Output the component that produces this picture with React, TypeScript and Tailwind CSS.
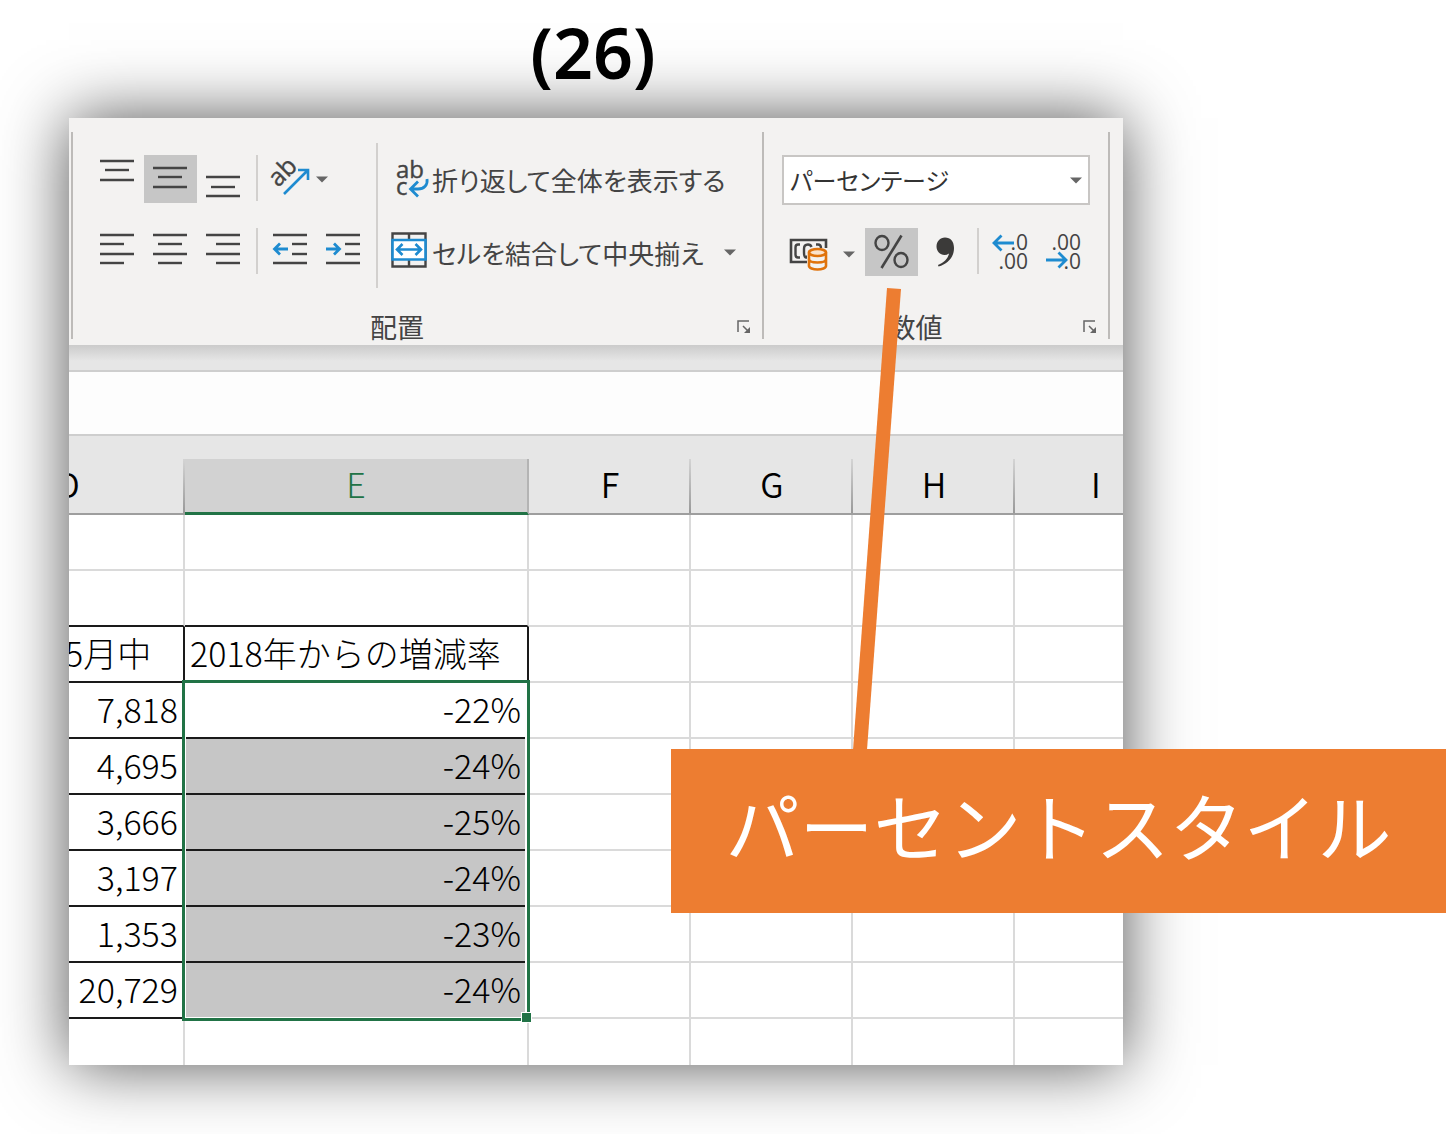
import type { ReactNode } from "react";

const INK = "#444444";
const BLUE = "#1e8bd0";

type Seg = [number, number, number];

/** Horizontal strokes: [x1, x2, y] */
function Lines({ segs, children }: { segs: Seg[]; children?: ReactNode }) {
  return (
    <svg width="53" height="48" viewBox="0 0 53 48" fill="none" aria-hidden="true">
      {segs.map(([a, b, y]) => (
        <path key={`${a}-${y}`} d={`M${a} ${y}H${b}`} stroke={INK} strokeWidth="2.4" />
      ))}
      {children}
    </svg>
  );
}

function IconButton({ label, pressed, children }: { label: string; pressed?: boolean; children: ReactNode }) {
  return (
    <button
      type="button"
      aria-label={label}
      aria-pressed={pressed}
      className={pressed ? "h-12 w-[53px] bg-[#c6c6c6]" : "h-12 w-[53px]"}
    >
      {children}
    </button>
  );
}

function Caret() {
  return (
    <svg width="12" height="7" viewBox="0 0 12 7" aria-hidden="true">
      <path d="M0 0.5H12L6 6.5Z" fill="#666" />
    </svg>
  );
}

function Divider() {
  return <span className="ml-1.5 mr-[5px] h-[46px] w-0.5 bg-[#d2d0ce]" />;
}

function OrientationIcon() {
  return (
    <svg width="40" height="48" viewBox="0 0 40 48" fill="none" className="overflow-visible" aria-hidden="true">
      <text
        transform="translate(15 33) rotate(-45)"
        fontFamily="Open Sans, sans-serif"
        fontSize="25"
        fill={INK}
        stroke={INK}
        strokeWidth="0.4"
      >
        ab
      </text>
      <path d="M21 39L44 16M35 15H45V25" stroke={BLUE} strokeWidth="2.6" />
    </svg>
  );
}

function WrapIcon() {
  return (
    <svg width="38" height="42" viewBox="0 0 38 42" fill="none" className="overflow-visible" aria-hidden="true">
      <text fontFamily="Open Sans, sans-serif" fontSize="24" fill={INK} stroke={INK} strokeWidth="0.4">
        <tspan x="6" y="20">ab</tspan>
        <tspan x="6" y="37">c</tspan>
      </text>
      <path d="M37 21C38 27 34 31 28 31H20M28 23.5L20.5 31L28 38.5" stroke={BLUE} strokeWidth="2.8" />
    </svg>
  );
}

function MergeIcon() {
  return (
    <svg width="38" height="36" viewBox="0 0 38 36" fill="none" className="-mt-1" aria-hidden="true">
      <path d="M2.5 1.5H35.5V34.5H2.5ZM19 1V8M19 28V35" stroke={INK} strokeWidth="2.4" />
      <path d="M2.5 8H35.5V27.5H2.5Z" fill="#fff" stroke={BLUE} strokeWidth="2.6" />
      <path d="M7 17.5H31M12.5 12L7 17.5L12.5 23M25.5 12L31 17.5L25.5 23" stroke={BLUE} strokeWidth="2.6" />
    </svg>
  );
}

function CurrencyIcon() {
  return (
    <svg width="39" height="34" viewBox="0 0 39 34" fill="none" aria-hidden="true">
      <path d="M19 25H2V3H37V11" stroke={INK} strokeWidth="2.6" />
      <path
        d="M11 7.5H9C7 7.5 6.5 9 6.5 10.5V17.5C6.5 19.5 7 20.5 9 20.5H11M18 18.5V20.5H17C15 20 15 18 15 15.5V12C15 9 16 7.5 19 7.5C21 7.5 22 8.5 22.5 10M27 7.5H29C31 7.5 32 8.5 32 11"
        stroke={INK}
        strokeWidth="2.4"
      />
      <path d="M18 14V29C20 31 24 32.5 28.5 32.5S37 31 37 29V14C33 10 23 10 18 14Z" fill="#f3f2f1" />
      <ellipse cx="28.5" cy="15.5" rx="8.5" ry="3.5" fill="#fbe3cc" stroke="#e0730c" strokeWidth="2.6" />
      <path
        d="M20 15.5V29C20 31 24 32.5 28.5 32.5S37 31 37 29V15.5M20 22C20 24.5 24 25.5 28.5 25.5S37 24.5 37 22"
        stroke="#e0730c"
        strokeWidth="2.6"
      />
    </svg>
  );
}

function PercentIcon() {
  return (
    <svg width="53" height="48" viewBox="0 0 53 48" fill="none" stroke={INK} aria-hidden="true">
      <ellipse cx="17" cy="15" rx="6.5" ry="7" strokeWidth="2.4" />
      <ellipse cx="36" cy="32" rx="6.5" ry="7" strokeWidth="2.4" />
      <path d="M36.5 7.5L16.5 40" strokeWidth="2.6" />
    </svg>
  );
}

function CommaIcon() {
  return (
    <svg width="53" height="48" viewBox="0 0 53 48" aria-hidden="true">
      <path
        d="M27 9.5C32.5 9.5 36 13.5 36 20C36 29 30 36 20.5 38.5L20 37C26 34.5 30 30.5 31 25.5C29.5 26.5 28 27 26.5 27C22 27 18.5 23 18.5 18.5C18.5 13.5 22 9.5 27 9.5Z"
        fill="#3b3a39"
      />
    </svg>
  );
}

function DecimalIcon({ more }: { more?: boolean }) {
  return (
    <svg width="53" height="48" viewBox="0 0 53 48" fill="none" aria-hidden="true">
      <text fontFamily="Open Sans, sans-serif" fontSize="21" fill={INK} textAnchor="end">
        <tspan x="44" y="22">{more ? ".0" : ".00"}</tspan>
        <tspan x="44" y="41">{more ? ".00" : ".0"}</tspan>
      </text>
      {more ? (
        <path d="M30 15H10M17.5 7.5L10 15L17.5 22.5" stroke={BLUE} strokeWidth="2.8" />
      ) : (
        <path d="M9 32H29M21.5 24.5L29 32L21.5 39.5" stroke={BLUE} strokeWidth="2.8" />
      )}
    </svg>
  );
}

function GroupFooter({ title }: { title: string }) {
  return (
    <div className="mt-auto flex items-center">
      <span className="flex-1 text-center text-[27px] leading-6">{title}</span>
      <button type="button" aria-label={`${title}の詳細`} className="ml-4 mr-[11px]">
        <svg width="14" height="14" viewBox="0 0 14 14" fill="none" stroke="#666" strokeWidth="1.5" aria-hidden="true">
          <path d="M1 12V1H12M6 6L11 11" />
          <path d="M13 7V13H7Z" fill="#666" stroke="none" />
        </svg>
      </button>
    </div>
  );
}

function Ribbon() {
  return (
    <div className="flex bg-[#f3f2f1] pb-1.5 pl-0.5 pt-3.5 text-[#444] [font-feature-settings:'palt']">
      <section aria-label="配置" className="flex h-[207px] w-[693px] flex-col border-x-2 border-[#bdbbb9]">
        <div className="flex pl-[18px]">
          <div className="mt-[23px] flex flex-col gap-[25px]">
            <div className="flex">
              <IconButton label="上揃え"><Lines segs={[[9, 43, 6], [14, 38, 15], [9, 43, 25]]} /></IconButton>
              <IconButton label="上下中央揃え" pressed><Lines segs={[[9, 43, 13], [14, 38, 22], [9, 43, 32]]} /></IconButton>
              <IconButton label="下揃え"><Lines segs={[[9, 43, 22], [14, 38, 32], [9, 43, 41]]} /></IconButton>
              <Divider />
              <button type="button" aria-label="方向" className="flex h-12 items-center gap-[13px]">
                <OrientationIcon />
                <Caret />
              </button>
            </div>
            <div className="flex">
              <IconButton label="左揃え"><Lines segs={[[9, 43, 7], [9, 33, 16], [9, 43, 26], [9, 33, 35]]} /></IconButton>
              <IconButton label="中央揃え"><Lines segs={[[9, 43, 7], [14, 38, 16], [9, 43, 26], [14, 38, 35]]} /></IconButton>
              <IconButton label="右揃え"><Lines segs={[[9, 43, 7], [19, 43, 16], [9, 43, 26], [19, 43, 35]]} /></IconButton>
              <Divider />
              <IconButton label="インデントを減らす">
                <Lines segs={[[10, 44, 7], [29, 44, 16], [29, 44, 26], [10, 44, 35]]}>
                  <path d="M25 21H11.5M17 15.5L11.5 21L17 26.5" stroke={BLUE} strokeWidth="2.8" />
                </Lines>
              </IconButton>
              <IconButton label="インデントを増やす">
                <Lines segs={[[10, 44, 7], [29, 44, 16], [29, 44, 26], [10, 44, 35]]}>
                  <path d="M10 21H23.5M18 15.5L23.5 21L18 26.5" stroke={BLUE} strokeWidth="2.8" />
                </Lines>
              </IconButton>
            </div>
          </div>
          <span className="ml-[7px] mt-[11px] h-[145px] w-0.5 bg-[#d2d0ce]" />
          <div className="ml-3 mt-[23px] flex flex-col gap-[25px] text-[26px]">
            <button type="button" className="flex h-12 items-center gap-1 whitespace-nowrap">
              <WrapIcon />
              <span>折り返して全体を表示する</span>
            </button>
            <button type="button" className="flex h-12 items-center gap-1 whitespace-nowrap">
              <MergeIcon />
              <span>セルを結合して中央揃え</span>
              <span className="ml-4"><Caret /></span>
            </button>
          </div>
        </div>
        <GroupFooter title="配置" />
      </section>
      <section aria-label="数値" className="flex h-[207px] w-[346px] flex-col border-r-2 border-[#bdbbb9]">
        <div className="mt-[23px] flex flex-col gap-[23px] px-[18px]">
          <div className="relative flex items-center">
            <select
              aria-label="表示形式"
              className="h-[50px] w-full appearance-none border-2 border-[#c8c6c4] bg-white pl-1.5 text-[24px] leading-none text-[#333]"
            >
              <option>パーセンテージ</option>
            </select>
            <span className="pointer-events-none absolute right-2 flex"><Caret /></span>
          </div>
          <div className="flex">
            <button type="button" aria-label="通貨表示形式" className="flex h-12 w-[83px] items-center gap-[15px] pl-[7px] pt-1">
              <CurrencyIcon />
              <Caret />
            </button>
            <IconButton label="パーセント スタイル" pressed><PercentIcon /></IconButton>
            <IconButton label="桁区切りスタイル"><CommaIcon /></IconButton>
            <Divider />
            <IconButton label="小数点以下の表示桁数を増やす"><DecimalIcon more /></IconButton>
            <IconButton label="小数点以下の表示桁数を減らす"><DecimalIcon /></IconButton>
          </div>
        </div>
        <GroupFooter title="数値" />
      </section>
    </div>
  );
}

const rows = [
  { count: "7,818", rate: "-22%" },
  { count: "4,695", rate: "-24%" },
  { count: "3,666", rate: "-25%" },
  { count: "3,197", rate: "-24%" },
  { count: "1,353", rate: "-23%" },
  { count: "20,729", rate: "-24%" },
];

const grid = "border-b-2 border-r-2 border-[#dadada]";
const boxed = "border-b-2 border-r-2 border-[#1a1a1a] font-light pt-0 pb-0.5";

function EmptyCells() {
  return (
    <>
      {["F", "G", "H", "I"].map((c) => (
        <td key={c} className={grid} />
      ))}
    </>
  );
}

function Sheet() {
  return (
    <div className="h-[606px] overflow-hidden bg-white">
      <table className="-ml-[118px] w-[1226px] table-fixed border-separate border-spacing-0 text-[34px] leading-[50px] text-black">
        <colgroup>
          <col className="w-[234px]" />
          <col className="w-[344px]" />
          <col className="w-[162px]" />
          <col className="w-[162px]" />
          <col className="w-[162px]" />
          <col className="w-[162px]" />
        </colgroup>
        <thead>
          <tr className="h-14">
            {["D", "E", "F", "G", "H", "I"].map((c) => (
              <th
                key={c}
                scope="col"
                className={
                  c === "E"
                    ? "border-b-[3px] border-r-2 border-b-[#217346] border-r-[#b4b4b4] bg-[#d2d2d2] px-0 pb-1 pt-0 font-light leading-[49px] text-[#217346]"
                    : "border-b-2 border-[#9e9e9e] bg-[#e6e6e6] bg-[linear-gradient(#d4d4d4,#999999)] bg-[length:2px_100%] bg-right bg-no-repeat px-0 pb-1 pt-0 font-[350]"
                }
              >
                {c}
              </th>
            ))}
          </tr>
        </thead>
        <tbody>
          <tr className="h-14">
            <td className={grid} />
            <td className={grid} />
            <EmptyCells />
          </tr>
          <tr className="h-14">
            <td className="border-b-2 border-r-2 border-b-[#1a1a1a] border-r-[#dadada]" />
            <td className="border-b-2 border-r-2 border-b-[#1a1a1a] border-r-[#dadada]" />
            <EmptyCells />
          </tr>
          <tr className="h-14">
            <td className={`${boxed} pl-[114px] pr-0`}>5月中</td>
            <td className={`${boxed} whitespace-nowrap pl-[5px] pr-0`}>2018年からの増減率</td>
            <EmptyCells />
          </tr>
          {rows.map((r, i) => (
            <tr key={r.count} className="h-14">
              <td className={`${boxed} pl-0 pr-[5px] text-right`}>{r.count}</td>
              <td className={`${boxed} pl-0 pr-1.5 text-right ${i === 0 ? "relative z-10" : "bg-[#c6c6c6]"}`}>
                {r.rate}
                {i === 0 && (
                  <span className="pointer-events-none absolute -left-[3px] -right-[3px] -top-[3px] block h-[341px] border-[3px] border-[#217346]">
                    <span className="block h-full border border-r-2 border-white" />
                    <span className="absolute -bottom-[5px] -right-[5px] block size-[11px] border border-white bg-[#217346]" />
                  </span>
                )}
              </td>
              <EmptyCells />
            </tr>
          ))}
          <tr className="h-14">
            <td className={grid} />
            <td className={grid} />
            <EmptyCells />
          </tr>
        </tbody>
      </table>
    </div>
  );
}

export default function App() {
  return (
    <main className="relative min-h-screen overflow-hidden bg-white pb-[69px] font-['Noto_Sans_CJK_JP',sans-serif]">
      <div className="ml-[69px] mr-[323px]">
        <h1 className="h-[118px] pr-1.5 text-center font-['Noto_Sans',sans-serif] text-[70px] font-semibold leading-[104px] text-black">
          (26)
        </h1>
        <div className="overflow-hidden shadow-[0_0_64px_rgba(0,0,0,0.68)]">
          <Ribbon />
          <div className="h-[25px] bg-[#e6e6e6] bg-[linear-gradient(#cbcbcb,#e6e6e6)] bg-[length:100%_16px] bg-no-repeat" />
          <input
            type="text"
            aria-label="数式バー"
            className="block h-[66px] w-full border-y-2 border-[#cecece] bg-[#fdfdfd] px-2 text-[27px]"
          />
          <div className="h-[23px] bg-[#e6e6e6]" />
          <Sheet />
        </div>
      </div>
      <svg
        className="absolute left-[853px] top-[288px]"
        width="49"
        height="462"
        viewBox="0 0 49 462"
        aria-hidden="true"
      >
        <path d="M34 0L48 1L14 462H0Z" fill="#ed7d31" />
      </svg>
      <p className="absolute left-[671px] right-0 top-[749px] whitespace-nowrap bg-[#ed7d31] pb-3.5 text-center text-[74px] leading-[150px] text-white">
        パーセントスタイル
      </p>
    </main>
  );
}
